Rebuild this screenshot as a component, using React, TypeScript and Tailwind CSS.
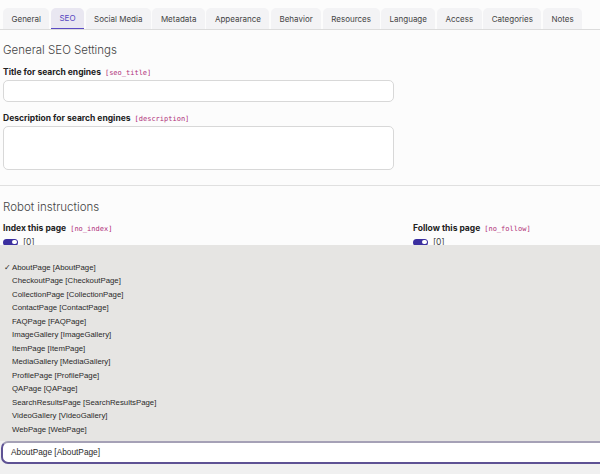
const tabs = [
  'General',
  'SEO',
  'Social Media',
  'Metadata',
  'Appearance',
  'Behavior',
  'Resources',
  'Language',
  'Access',
  'Categories',
  'Notes',
];

const pageTypes = [
  'AboutPage',
  'CheckoutPage',
  'CollectionPage',
  'ContactPage',
  'FAQPage',
  'ImageGallery',
  'ItemPage',
  'MediaGallery',
  'ProfilePage',
  'QAPage',
  'SearchResultsPage',
  'VideoGallery',
  'WebPage',
];

function FieldLabel({ text, field }: { text: string; field: string }) {
  return (
    <div className="flex h-[11px] items-baseline gap-[4px] text-[8.5px] leading-[11px] font-bold text-[#222]">
      <span>{text}</span>
      <span className="font-['DejaVu_Sans_Mono',monospace] text-[7px] font-normal text-[#b0307a]">[{field}]</span>
    </div>
  );
}

function Toggle() {
  return (
    <div className="flex h-[9px] items-center gap-[5px] text-[8.5px] text-[#444]">
      <span className="flex h-[7px] w-[15px] items-center justify-end rounded-full bg-[#3b2fa0] pr-[1.5px]">
        <span className="h-[4.5px] w-[4.5px] rounded-full bg-white" />
      </span>
      <span>[0]</span>
    </div>
  );
}

export default function App() {
  return (
    <div className="relative h-[474px] w-[600px] overflow-hidden bg-[#fcfcfc] font-['Inter',sans-serif]">
      {/* tabs */}
      <div className="flex gap-[1.5px] border-b border-[#dcdcdc] px-[3px] pt-[8px]">
        {tabs.map((t) =>
          t === 'SEO' ? (
            <div
              key={t}
              className="flex h-[21px] shrink-0 items-center whitespace-nowrap rounded-t-[5px] border-b-[1.5px] border-[#5b4bc4] bg-[#e9e7f1] px-[8.5px] text-[8px] text-[#5546c0]"
            >
              {t}
            </div>
          ) : (
            <div
              key={t}
              className="flex h-[21px] shrink-0 items-center whitespace-nowrap rounded-t-[5px] bg-[#f3f3f5] px-[8.5px] text-[8px] text-[#444]"
            >
              {t}
            </div>
          ),
        )}
      </div>

      <div className="px-[3px]">
        <div className="pt-[13px] text-[11.5px] leading-[14px] font-light text-[#444]">General SEO Settings</div>

        <div className="mt-[9.5px]">
          <FieldLabel text="Title for search engines" field="seo_title" />
          <div className="mt-[2.5px] h-[22px] w-[391px] rounded-[5px] border border-[#d8d8d8] bg-white" />
        </div>

        <div className="mt-[10.5px]">
          <FieldLabel text="Description for search engines" field="description" />
          <div className="mt-[2.5px] h-[44px] w-[391px] rounded-[5px] border border-[#d8d8d8] bg-white" />
        </div>
      </div>

      <div className="mt-[15px] border-t border-[#e0e0e0]" />

      <div className="px-[3px]">
        <div className="pt-[14px] text-[11.5px] leading-[14px] font-light text-[#444]">Robot instructions</div>
        <div className="mt-[8.5px] grid grid-cols-[410px_1fr]">
          <div className="flex flex-col gap-[4px]">
            <FieldLabel text="Index this page" field="no_index" />
            <Toggle />
          </div>
          <div className="flex flex-col gap-[4px]">
            <FieldLabel text="Follow this page" field="no_follow" />
            <Toggle />
          </div>
        </div>
      </div>

      {/* open select popup */}
      <div className="absolute left-0 right-0 top-[245px] bottom-0 flex flex-col bg-[#f0f0f0]">
        <div className="flex h-[196px] flex-col bg-[#e6e5e3] pt-[16px] font-['Liberation_Sans',sans-serif] text-[7.8px] text-[#2a2a2a]">
          {pageTypes.map((p, i) => (
            <div key={p} className="flex h-[13.5px] items-center">
              <span className="w-[12px] pl-[4px] text-[8px]">{i === 0 ? '✓' : ''}</span>
              <span>
                {p} [{p}]
              </span>
            </div>
          ))}
        </div>
        <div className="ml-[1px] flex h-[23px] items-center rounded-l-[7px] border-2 border-r-0 border-[#5e5294] border-t-[#a5a1b6] bg-white pl-[8px] font-['Liberation_Sans',sans-serif] text-[8.3px] text-[#2a2a2a]">
          AboutPage [AboutPage]
        </div>
      </div>
    </div>
  );
}
